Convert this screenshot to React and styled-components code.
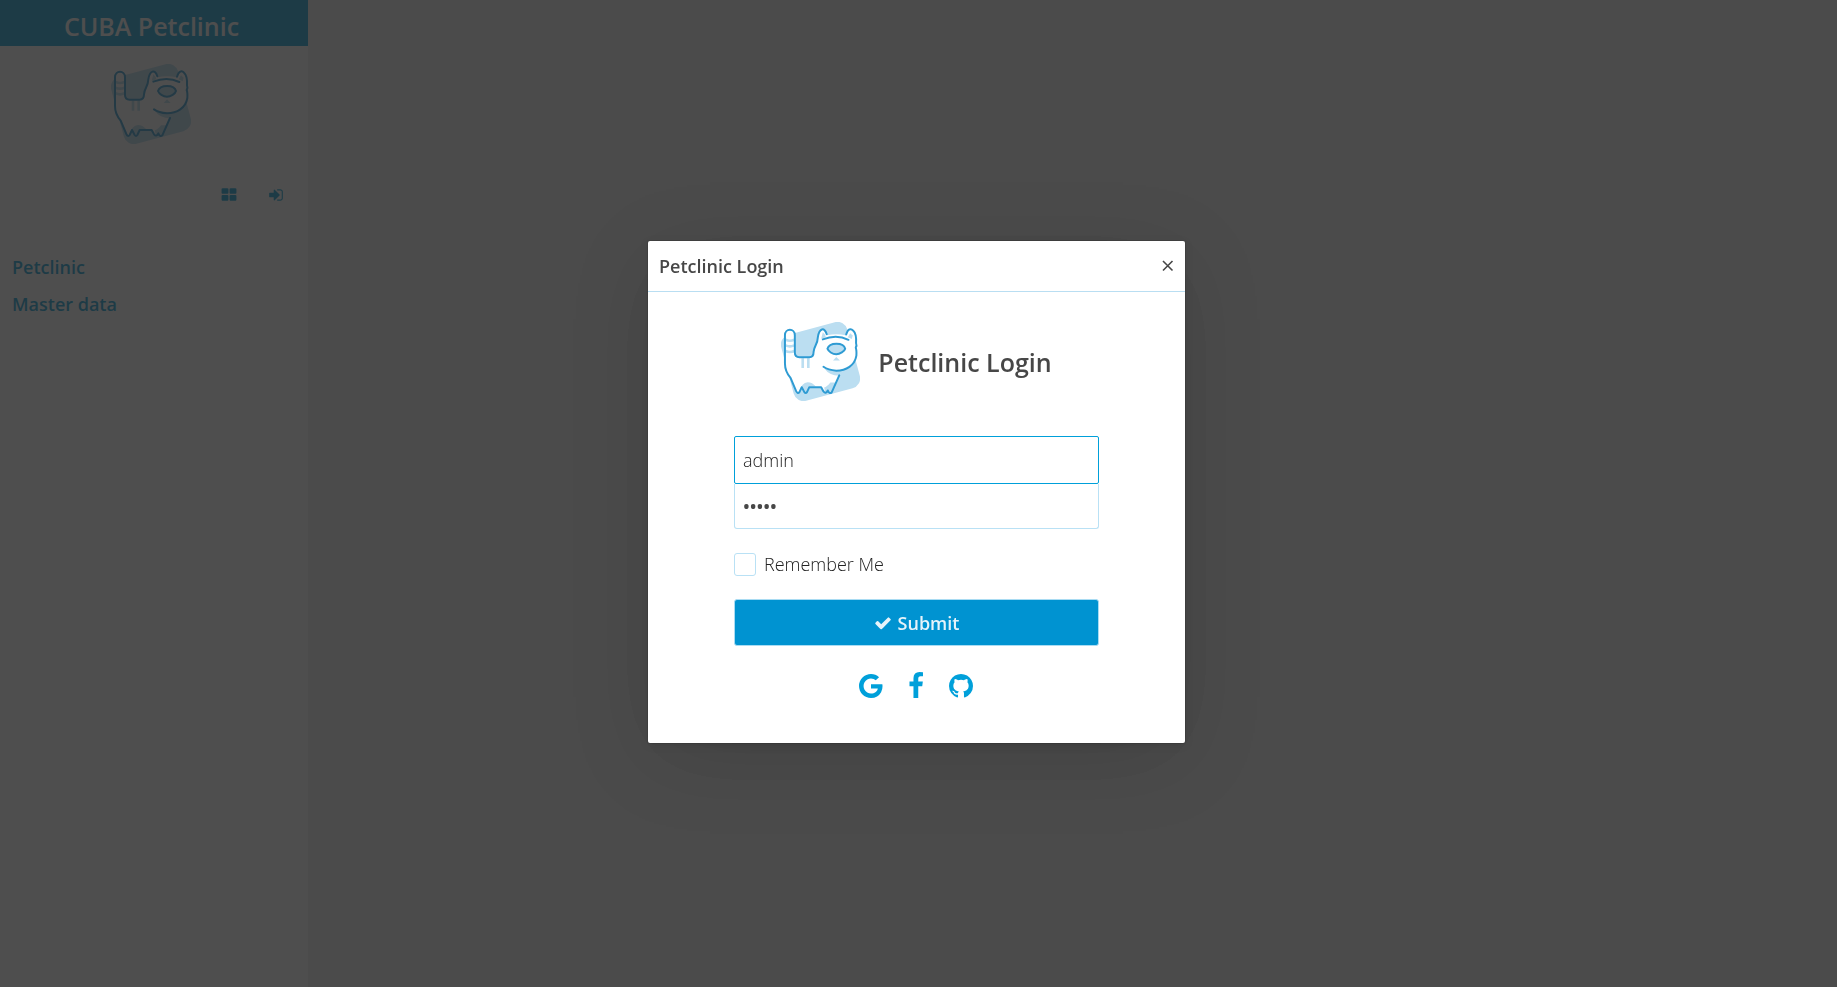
import React from "react";
import styled, { createGlobalStyle } from "styled-components";

const GlobalStyle = createGlobalStyle`
  *, *::before, *::after { box-sizing: border-box; }
  html, body { margin: 0; }
  body {
    background: #ededed;
    color: #474747;
    font-family: "Open Sans", "Noto Sans", sans-serif;
    font-size: 18px;
    line-height: 24px;
  }
  button, input { font: inherit; color: inherit; }
`;

const Workspace = styled.div`
  display: flex;
  min-height: 100vh;
`;

const Sidebar = styled.aside`
  display: flex;
  flex-direction: column;
  width: 308px;
  background: #ffffff;
`;

const Brand = styled.h1`
  margin: 0;
  padding: 7px 5px 0 0;
  height: 46px;
  background: #0ea0d6;
  color: #ffffff;
  font-size: 25px;
  font-weight: 600;
  line-height: 38px;
  text-align: center;
`;

const SidebarLogo = styled.div`
  display: flex;
  justify-content: center;
  padding: 18px 6px 0 0;
`;

const Tools = styled.div`
  display: flex;
  justify-content: flex-end;
  gap: 31px;
  padding: 43px 24px 0 0;
`;

const IconButton = styled.button`
  display: flex;
  padding: 0;
  border: 0;
  background: none;
  color: ${(p) => p.$color || "#00a0da"};
  cursor: pointer;
`;

const Nav = styled.nav`
  display: flex;
  flex-direction: column;
  gap: 13px;
  padding: 52px 12px 0;
`;

const NavLink = styled.a`
  color: #0ea0d6;
  font-weight: 600;
  text-decoration: none;
`;

const Curtain = styled.div`
  position: fixed;
  inset: 0;
  display: flex;
  align-items: center;
  justify-content: center;
  padding: 0 4px 3px 0;
  background: rgba(34, 34, 34, 0.8);
`;

const Dialog = styled.section`
  width: 537px;
  border-radius: 2px;
  background: #ffffff;
  box-shadow: 0 2px 10px 0 rgba(0, 0, 0, 0.1), 0 16px 80px -6px rgba(0, 0, 0, 0.15),
    0 0 0 1px rgba(0, 0, 0, 0.1);
`;

const DialogHeader = styled.header`
  display: flex;
  align-items: center;
  justify-content: space-between;
  height: 51px;
  padding: 0 11px;
  border-bottom: 1px solid #b9def2;
`;

const DialogTitle = styled.h2`
  margin: 0;
  font-size: 18px;
  font-weight: 600;
`;

const DialogBody = styled.div`
  display: flex;
  flex-direction: column;
  align-items: center;
  padding: 30px 20px 43px;
`;

const Welcome = styled.div`
  display: flex;
  align-items: center;
  gap: 18px;
`;

const WelcomeTitle = styled.h3`
  margin: 0;
  font-size: 25px;
  font-weight: 600;
  line-height: 34px;
`;

const Form = styled.form`
  display: flex;
  flex-direction: column;
  width: 365px;
  padding-top: 35px;
`;

const Field = styled.input`
  width: 100%;
  height: ${(p) => (p.$active ? 48 : 45)}px;
  padding: 0 8px;
  border: 1px solid ${(p) => (p.$active ? "#00a0da" : "#b9e1f5")};
  border-top-width: ${(p) => (p.$active ? 1 : 0)}px;
  border-radius: ${(p) => (p.$active ? "2px" : "0 0 3px 3px")};
  background: #ffffff;
  color: #222222;
  font-weight: 300;
  outline: none;

  &[type="password"] {
    color: #474747;
    font-weight: 600;
  }
`;

const Remember = styled.label`
  display: flex;
  align-items: center;
  gap: 8px;
  margin-top: 24px;
  color: #222222;
  font-weight: 300;
  line-height: 23px;
`;

const Checkbox = styled.input`
  appearance: none;
  width: 22px;
  height: 23px;
  margin: 0;
  border: 1px solid #b9e1f5;
  border-radius: 3px;
  background: #ffffff;
  &:checked { background: #0093d1; }
`;

const Submit = styled.button`
  display: flex;
  align-items: center;
  justify-content: center;
  gap: 6px;
  height: 47px;
  margin-top: 23px;
  border: 1px solid #a9dcf3;
  border-radius: 3px;
  background: #0093d1;
  color: #e6f3fa;
  font-weight: 600;
  cursor: pointer;
`;

const Social = styled.div`
  display: flex;
  gap: 17px;
  padding: 26px 2px 0 0;
`;

const ICONS = {
  windows:
    "M832 1024v384q0 52-38 90t-90 38h-512q-52 0-90-38t-38-90v-384q0-52 38-90t90-38h512q52 0 90 38t38 90zm0-768v384q0 52-38 90t-90 38h-512q-52 0-90-38t-38-90v-384q0-52 38-90t90-38h512q52 0 90 38t38 90zm896 768v384q0 52-38 90t-90 38h-512q-52 0-90-38t-38-90v-384q0-52 38-90t90-38h512q52 0 90 38t38 90zm0-768v384q0 52-38 90t-90 38h-512q-52 0-90-38t-38-90v-384q0-52 38-90t90-38h512q52 0 90 38t38 90z",
  signIn:
    "M1312 896q0 26-19 45l-544 544q-19 19-45 19t-45-19-19-45v-288h-448q-26 0-45-19t-19-45v-384q0-26 19-45t45-19h448v-288q0-26 19-45t45-19 45 19l544 544q19 19 19 45zm352-352v704q0 119-84.5 203.5t-203.5 84.5h-320q-13 0-22.5-9.5t-9.5-22.5q0-4-1-20t-.5-26.5 3-23.5 10-19.5 20.5-6.5h320q66 0 113-47t47-113v-704q0-66-47-113t-113-47h-312l-11.5-1-11.5-3-8-5.5-7-9-2-13.5q0-4-1-20t-.5-26.5 3-23.5 10-19.5 20.5-6.5h320q119 0 203.5 84.5t84.5 203.5z",
  check:
    "M1671 566q0 40-28 68l-724 724-136 136q-28 28-68 28t-68-28l-136-136-362-362q-28-28-28-68t28-68l136-136q28-28 68-28t68 28l294 295 656-657q28-28 68-28t68 28l136 136q28 28 28 68z",
  google:
    "M896 786h725q12 67 12 128 0 217-91 387.5t-259.5 266.5-386.5 96q-157 0-299-60.5t-245-163.5-163.5-245-60.5-299 60.5-299 163.5-245 245-163.5 299-60.5q300 0 515 201l-209 201q-123-119-306-119-129 0-238.5 65t-173.5 176.5-64 243.5 64 243.5 173.5 176.5 238.5 65q87 0 160-24t120-60 82-82 51.5-87 22.5-78h-436v-264z",
  facebook:
    "M1343 12v264h-157q-86 0-116 36t-30 108v189h293l-39 296h-254v759h-306v-759h-255v-296h255v-218q0-186 104-288.5t277-102.5q147 0 228 12z",
  github:
    "M896 128q209 0 385.5 103t279.5 279.5 103 385.5q0 251-146.5 451.5t-378.5 277.5q-27 5-40-7t-13-30q0-3 .5-76.5t.5-134.5q0-97-52-142 57-6 102.5-18t94-39 81-66.5 53-105 20.5-150.5q0-119-79-206 37-91-8-204-28-9-81 11t-92 44l-38 24q-93-26-192-26t-192 26q-16-11-42.5-27t-83.5-38.5-85-13.5q-45 113-8 204-79 87-79 206 0 85 20.5 150t52.5 105 80.5 67 94 39 102.5 18q-39 36-49 103-21 10-45 15t-57 5-65.5-21.5-55.5-62.5q-19-32-48.5-52t-49.5-24l-20-3q-21 0-29 4.5t-5 11.5 9 14 13 12l7 5q22 10 43.5 38t31.5 51l10 23q13 38 44 61.5t67 30 69.5 7 55.5-3.5l23-4q0 38 .5 88.5t.5 54.5q0 18-13 30t-40 7q-232-77-378.5-277.5t-146.5-451.5q0-209 103-385.5t279.5-279.5 385.5-103z",
};

function Icon({ name, size }) {
  return (
    <svg width={size} height={size} viewBox="0 0 1792 1792" fill="currentColor" aria-hidden="true">
      <path d={ICONS[name]} />
    </svg>
  );
}

function CatLogo({ size }) {
  return (
    <svg width={size} height={size} viewBox="334 192 240 240" fill="none" aria-hidden="true">
      <rect x="350" y="208" width="208" height="208" rx="31" fill="#bbdef1" transform="rotate(-15 454 312)" />
      <path
        d="M346 232C346 210 376 210 376 232V285Q376 299 390 299H420Q433 299 433 283C434 268 443 262 445 248C446 228 452 213 461 213C468 214 472 222 474 232Q502 226 530 232C533 220 540 213 546 213C558 216 562 228 562 245V256Q565 262 561 270Q564 276 563 295C556 325 532 340 502 340L466 333Q480 354 511 355L487 407Q480 412 475 400Q466 414 457 390H420L413 406Q406 412 397 390L389 407Q383 411 379 402L363 362Q346 342 346 318Z"
        fill="#fff"
      />
      <path d="M392 398Q396 378 415 375Q429 375 440 388H420L412 407H406L397 391ZM465 391Q474 389 484 376H502L487 407L476 400L469 408Z" fill="#bbdef1" />
      <path d="M348 246Q361 252 374 246M348 263Q361 269 374 263M348 280Q361 286 374 280M400 302V332M417 302V332" stroke="#bbdef1" strokeWidth="8" />
      <path d="M456 243L461 223L468 231L470 238ZM537 238L544 226L552 233L549 244ZM502 298L492 309H513Z" fill="#bbdef1" />
      <g stroke="#2e9bd3" strokeWidth="6" strokeLinecap="round" strokeLinejoin="round">
        <path d="M473 229C466 206 450 211 446 238C445 262 435 262 433 283Q433 299 420 299H390Q376 299 376 285V232C376 210 346 210 346 232V318Q346 342 363 362L380 402Q385 412 390 405L397 390L405 405Q409 411 413 405L420 390H456L463 403Q470 412 476 400Q481 412 488 406L511 354" />
        <path d="M461 245Q502 228 539 246" />
        <path d="M532 230C537 213 546 210 553 218C562 226 563 240 562 256Q565 263 561 270Q564 277 563 294C558 324 532 340 502 340Q477 338 463 328" />
        <path d="M475 273C481 253 524 253 529 273C527 281 513 290 502 290C490 290 478 281 475 273Z" fill="#bbdef1" />
      </g>
    </svg>
  );
}

function CloseIcon() {
  return (
    <svg width="12" height="12" viewBox="0 0 12 12" stroke="#474747" strokeWidth="1.6" aria-hidden="true">
      <path d="M1 1L10.500 10.500M10.500 1L1 10.500" />
    </svg>
  );
}

export default function App() {
  return (
    <>
      <GlobalStyle />
      <Workspace>
        <Sidebar>
          <Brand>CUBA Petclinic</Brand>
          <SidebarLogo>
            <CatLogo size={80} />
          </SidebarLogo>
          <Tools>
            <IconButton type="button" aria-label="Open windows" $color="#0ea0d6">
              <Icon name="windows" size={16} />
            </IconButton>
            <IconButton type="button" aria-label="Log in" $color="#0ea0d6">
              <Icon name="signIn" size={16} />
            </IconButton>
          </Tools>
          <Nav>
            <NavLink href="#petclinic">Petclinic</NavLink>
            <NavLink href="#master-data">Master data</NavLink>
          </Nav>
        </Sidebar>
      </Workspace>
      <Curtain>
        <Dialog role="dialog" aria-modal="true" aria-labelledby="login-title">
          <DialogHeader>
            <DialogTitle id="login-title">Petclinic Login</DialogTitle>
            <IconButton type="button" aria-label="Close">
              <CloseIcon />
            </IconButton>
          </DialogHeader>
          <DialogBody>
            <Welcome>
              <CatLogo size={79} />
              <WelcomeTitle>Petclinic Login</WelcomeTitle>
            </Welcome>
            <Form onSubmit={(e) => e.preventDefault()}>
              <Field $active type="text" aria-label="Username" defaultValue="admin" />
              <Field type="password" aria-label="Password" defaultValue="admin" />
              <Remember>
                <Checkbox type="checkbox" />
                Remember Me
              </Remember>
              <Submit type="submit">
                <Icon name="check" size={18} />
                Submit
              </Submit>
            </Form>
            <Social>
              <IconButton type="button" aria-label="Google">
                <Icon name="google" size={28} />
              </IconButton>
              <IconButton type="button" aria-label="Facebook">
                <Icon name="facebook" size={28} />
              </IconButton>
              <IconButton type="button" aria-label="GitHub">
                <Icon name="github" size={28} />
              </IconButton>
            </Social>
          </DialogBody>
        </Dialog>
      </Curtain>
    </>
  );
}
